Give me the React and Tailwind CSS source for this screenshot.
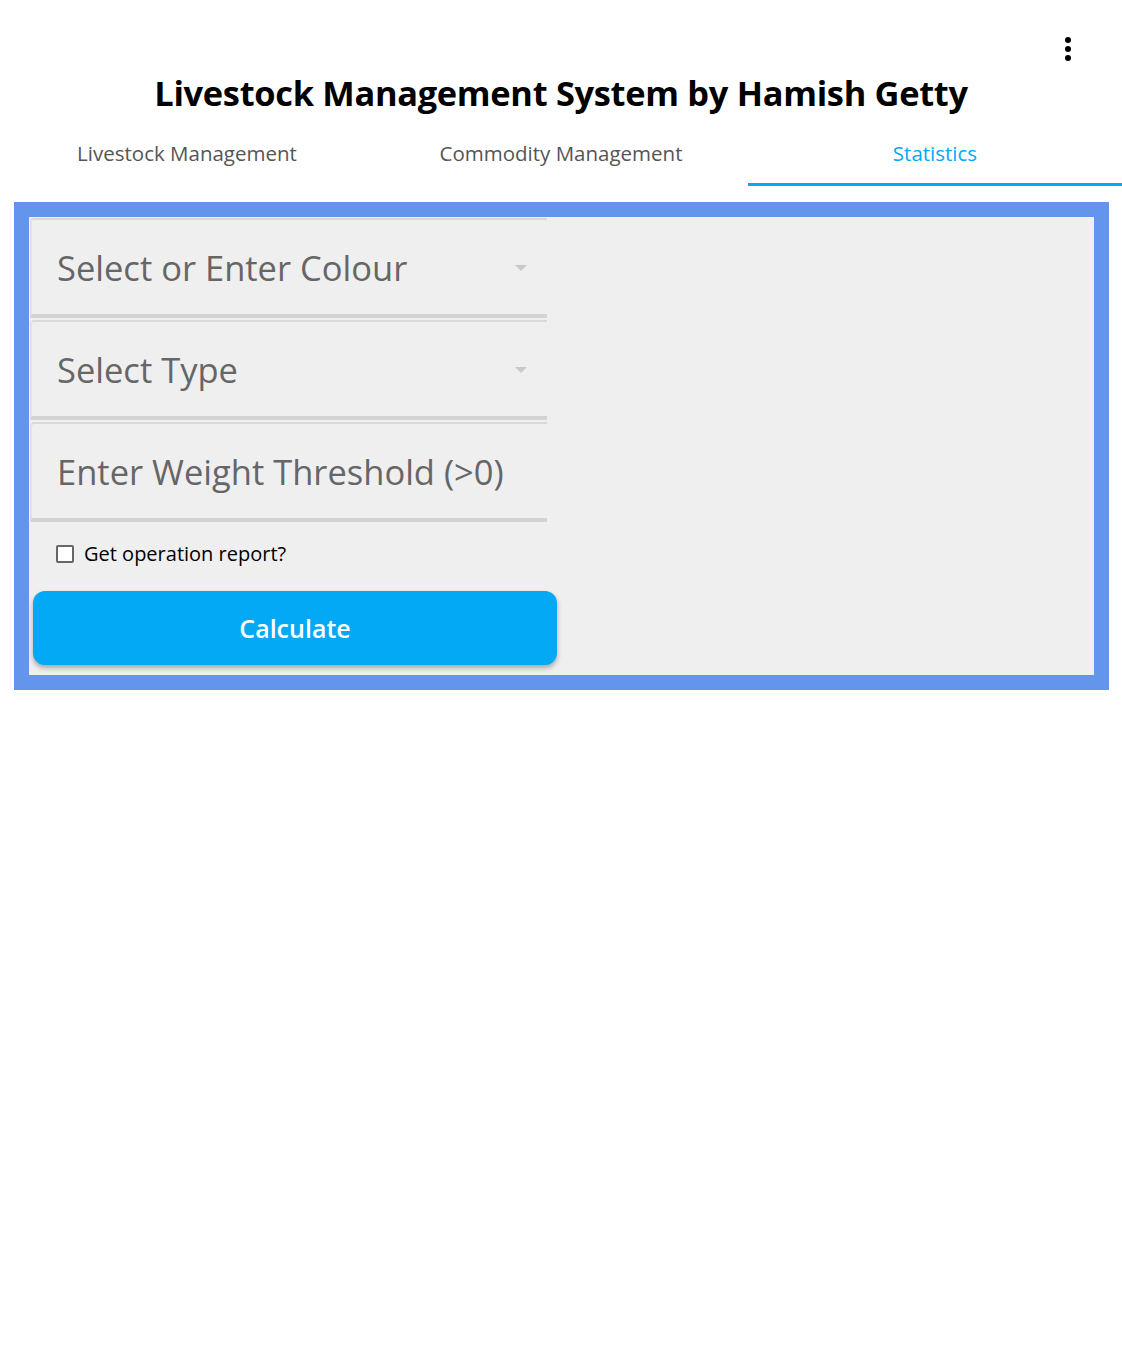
import { useState } from 'react'

const tabs = ['Livestock Management', 'Commodity Management', 'Statistics']

const Field = ({ label, dropdown }) => (
  <div className="relative flex h-[100px] w-[517px] items-center rounded-tl-[4px] border-t-[2px] border-l-[2px] border-b-[4px] border-t-[#d9d9d9] border-l-[#e2e2e2] border-b-[#d3d3d3] bg-[#efefef] pl-[25px] pt-[3px]">
    <span className="text-[34.5px] leading-none text-[#666666]">{label}</span>
    {dropdown && (
      <svg className="absolute right-[20px] top-[45px]" width="12" height="6" viewBox="0 0 12 6">
        <path d="M0 0 L12 0 L6 6 Z" fill="#c9c9c9" />
      </svg>
    )}
  </div>
)

export default function App() {
  const [activeTab, setActiveTab] = useState(2)
  const [report, setReport] = useState(false)

  return (
    <div className="min-h-screen bg-white font-['Open_Sans',sans-serif]">
      {/* Header */}
      <div className="flex justify-end pr-[50px] pt-[37px]">
        <svg width="8" height="26" viewBox="0 0 8 26">
          <circle cx="4" cy="3" r="3" fill="#000" />
          <circle cx="4" cy="12" r="3" fill="#000" />
          <circle cx="4" cy="21" r="3" fill="#000" />
        </svg>
      </div>
      <h1 className="mt-[8px] text-center text-[34.4px] font-bold leading-[44px] text-black tracking-[-0.3px]">
        Livestock Management System by Hamish Getty
      </h1>

      {/* Tabs */}
      <div className="mt-[8px] grid grid-cols-3">
        {tabs.map((tab, i) => (
          <button
            key={tab}
            onClick={() => setActiveTab(i)}
            className={`flex h-[63px] items-center justify-center border-b-[3px] text-[20.5px] ${
              activeTab === i ? 'border-[#03a9f4] text-[#03a9f4]' : 'border-transparent text-[#555555]'
            }`}
          >
            {tab}
          </button>
        ))}
      </div>

      {/* Statistics panel */}
      <div className="ml-[14px] mr-[13px] mt-[16px] border-[15px] border-[#6495ed] bg-[#efefef] pb-[10px] pl-[1px] pt-[1px]">
        <div className="flex flex-col gap-[2px]">
          <Field label="Select or Enter Colour" dropdown />
          <Field label="Select Type" dropdown />
          <Field label="Enter Weight Threshold (>0)" />
        </div>
        <label className="ml-[26px] mt-[20px] flex h-[24px] items-center gap-[10px] text-[20px] text-black">
          <input
            type="checkbox"
            checked={report}
            onChange={() => setReport(!report)}
            className="h-[18px] w-[18px] appearance-none rounded-[2px] border-[2px] border-[#666666] bg-white"
          />
          <span>Get operation report?</span>
        </label>
        <button className="ml-[3px] mt-[25px] block h-[74px] w-[524px] rounded-[12px] bg-[#03a9f4] pt-[2px] text-[25px] font-semibold text-white shadow-[0_3px_5px_rgba(0,0,0,0.3)]">
          Calculate
        </button>
      </div>
    </div>
  )
}
